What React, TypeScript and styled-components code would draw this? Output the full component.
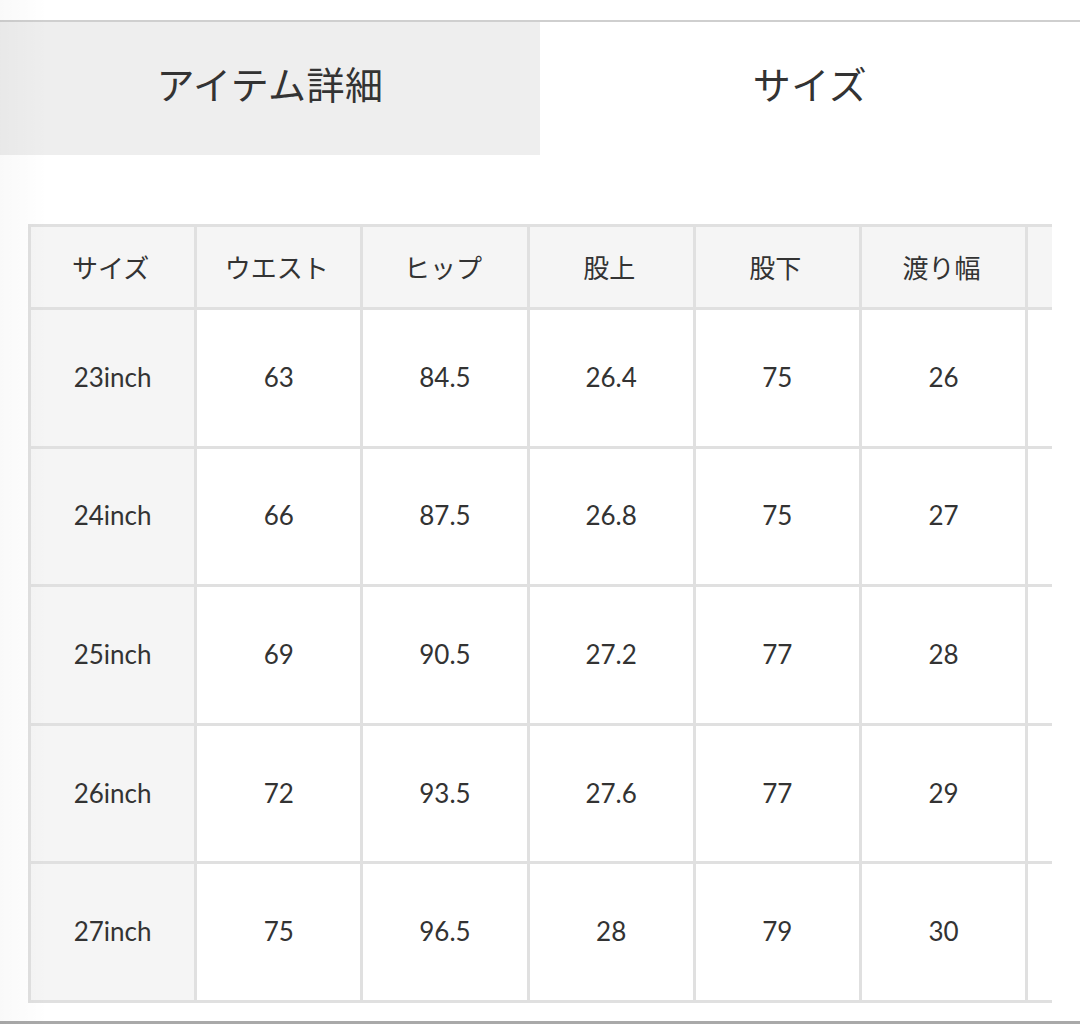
import { FC } from 'react'
import styled, { createGlobalStyle } from 'styled-components'

const GlobalStyle = createGlobalStyle`
  html, body {
    margin: 0;
    padding: 0;
    background: #fff;
  }
  body {
    font-family: 'Lato', 'Noto Sans CJK JP', sans-serif;
    color: #333;
  }
`

const HEADERS = ['サイズ', 'ウエスト', 'ヒップ', '股上', '股下', '渡り幅', '']

const ROWS = [
  ['23inch', '63', '84.5', '26.4', '75', '26', ''],
  ['24inch', '66', '87.5', '26.8', '75', '27', ''],
  ['25inch', '69', '90.5', '27.2', '77', '28', ''],
  ['26inch', '72', '93.5', '27.6', '77', '29', ''],
  ['27inch', '75', '96.5', '28', '79', '30', ''],
]

const Page = styled.div`
  position: relative;
  height: 1024px;
  padding-top: 20px;
  box-sizing: border-box;
  display: flex;
  flex-direction: column;
  overflow: hidden;

  &::before {
    content: '';
    position: absolute;
    top: 0;
    left: 0;
    bottom: 0;
    width: 48px;
    background: linear-gradient(to right, rgba(0, 0, 0, 0.025), rgba(0, 0, 0, 0));
    pointer-events: none;
  }
`

const Frame = styled.div`
  flex: 1;
  border-top: 2px solid #cfcfcf;
  border-bottom: 3px solid #a9a9a9;
  display: flex;
  flex-direction: column;
`

const Tabs = styled.div`
  display: grid;
  grid-template-columns: 540px 1fr;
  height: 133px;
`

const Tab = styled.div<{ $active?: boolean }>`
  display: flex;
  align-items: center;
  justify-content: center;
  background: ${(p) => (p.$active ? '#fff' : '#eeeeee')};
  font-family: 'Noto Sans CJK JP', sans-serif;
  font-size: 38px;
  letter-spacing: 0.5px;
  color: #333;
  padding-bottom: 12px;
`

const TableWrap = styled.div`
  margin: 69px 0 0 28px;
  width: 1024px;
  overflow: hidden;
`

const Grid = styled.div`
  display: grid;
  grid-template-columns: repeat(7, 163.2px);
  grid-template-rows: 80px repeat(5, 135.6px);
  gap: 3px;
  padding: 3px;
  background: #e0e0e0;
  width: max-content;
`

const Cell = styled.div<{ $shade?: boolean }>`
  display: flex;
  align-items: center;
  justify-content: center;
  background: ${(p) => (p.$shade ? '#f5f5f5' : '#fff')};
  font-size: 26px;
  color: #333;
  padding-bottom: 2px;
`

const HeadCell = styled(Cell)`
  font-family: 'Noto Sans CJK JP', sans-serif;
  font-size: 26px;
  padding-right: 4px;
`

const SizeTable: FC = () => (
  <TableWrap>
    <Grid>
      {HEADERS.map((h, i) => (
        <HeadCell key={`h${i}`} $shade>
          {h}
        </HeadCell>
      ))}
      {ROWS.map((row, r) =>
        row.map((v, c) => (
          <Cell key={`${r}-${c}`} $shade={c === 0}>
            {v}
          </Cell>
        ))
      )}
    </Grid>
  </TableWrap>
)

export default function App() {
  return (
    <>
      <GlobalStyle />
      <Page>
        <Frame>
          <Tabs>
            <Tab>アイテム詳細</Tab>
            <Tab $active>サイズ</Tab>
          </Tabs>
          <SizeTable />
        </Frame>
      </Page>
    </>
  )
}
